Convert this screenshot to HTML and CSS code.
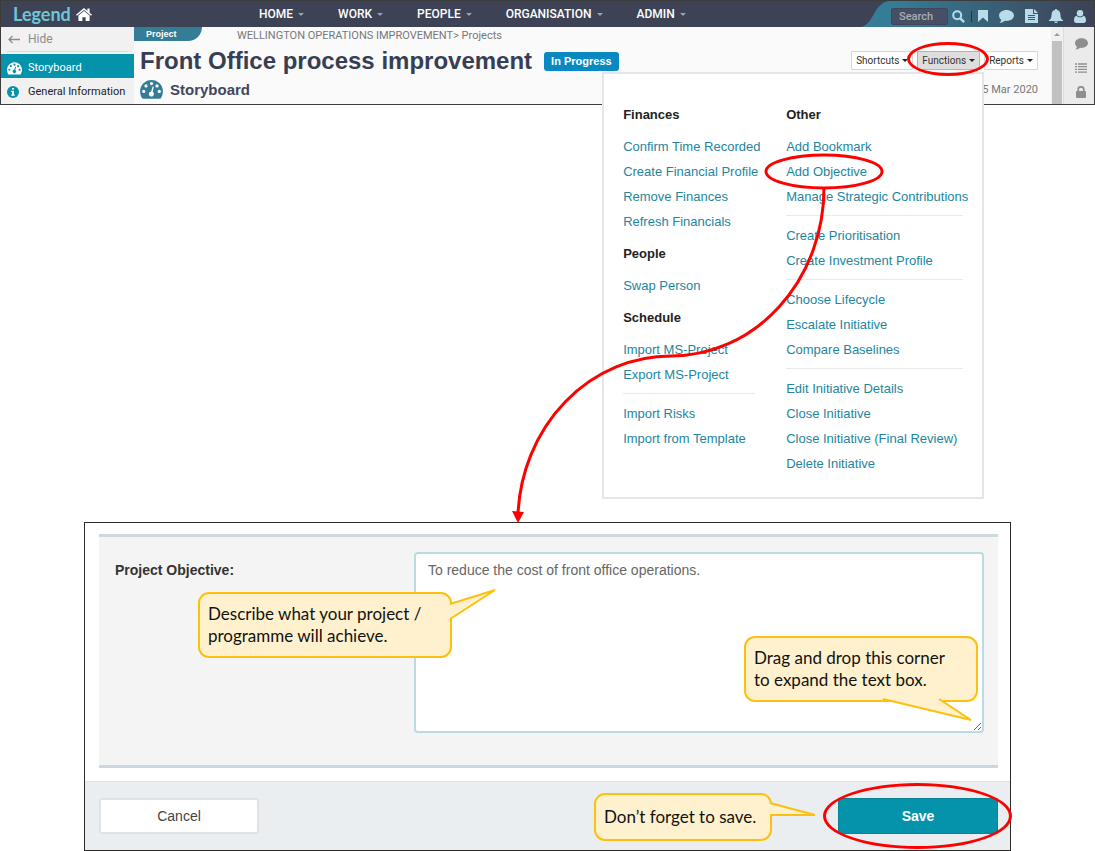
FILE: index.html
```html
<!DOCTYPE html>
<html lang="en">
<head>
<meta charset="utf-8">
<title>Legend - Front Office process improvement</title>
<link rel="stylesheet" href="styles.css">
</head>
<body>
<svg class="defs" aria-hidden="true">
  <symbol id="i-gauge" viewBox="0 0 24 20"><path fill="currentColor" d="M12 0A12 12 0 0 0 0 12c0 2.600 .8 5 2 7 .3.500.6.700 1 .7h18c.4 0 .7-.2 1-.7a12 12 0 0 0 2-7A12 12 0 0 0 12 0z"/><g fill="var(--hole)"><circle cx="3.800" cy="12" r="1.700"/><circle cx="6.200" cy="6.200" r="1.700"/><circle cx="12" cy="3.800" r="1.700"/><circle cx="17.800" cy="6.200" r="1.700"/><circle cx="20.200" cy="12" r="1.700"/><path d="M13.200 6.800l1.300.4-1.200 5.200a2.700 2.700 0 1 1-1.700-.4z"/></g></symbol>
  <symbol id="i-comment" viewBox="0 0 16 14"><path fill="currentColor" d="M8 0c4.400 0 8 2.600 8 5.900s-3.600 5.900-8 5.900c-.6 0-1.200 0-1.700-.1C4.800 13 3 13.700 1 13.900c-.3 0-.4-.3-.2-.5.9-.8 1.400-1.700 1.600-2.900C.9 9.400 0 7.800 0 5.900 0 2.600 3.600 0 8 0z"/></symbol>
</svg>

<div class="window">
  <header class="topbar">
    <a class="logo" href="#"><span>Legend</span>
      <svg width="16" height="13" viewBox="0 0 16 13"><path fill="#fff" d="M8 0L0 6.700l.9 1.100L8 1.900l7.100 5.900.9-1.100-2.400-2V.6h-2.200v2.300z"/><path fill="#fff" d="M8 3L2.400 7.600V13h4V9.200h3.200V13h4V7.600z"/></svg>
    </a>
    <nav class="nav">
      <a href="#">HOME</a><a href="#">WORK</a><a href="#">PEOPLE</a><a href="#">ORGANISATION</a><a href="#">ADMIN</a>
    </nav>
    <div class="tools">
      <svg class="swoosh" width="30" height="26" viewBox="0 0 30 26"><path fill="#357d96" d="M0 26C14 23 12 0 30 0v26z"/></svg>
      <div class="tools-bar">
        <input class="search" type="text" placeholder="Search" aria-label="Search">
        <svg width="13" height="13" viewBox="0 0 13 13"><g fill="none" stroke="#b9dcea" stroke-width="2"><circle cx="5.200" cy="5.200" r="4"/><path d="M8.300 8.300l3.800 3.800" stroke-width="2.400"/></g></svg>
        <i class="sep"></i>
        <svg width="10" height="12" viewBox="0 0 10 12"><path fill="#b9dcea" d="M0 0h10v12L5 7.400 0 12z"/></svg>
        <svg class="pale" width="15" height="13"><use href="#i-comment"/></svg>
        <svg width="13" height="14" viewBox="0 0 13 14"><path fill="#b9dcea" d="M0 0h8v5h5v9H0zM9 0l4 4H9z"/><path stroke="#3b5a70" d="M3 6.500h7M3 8.500h7M3 10.500h7"/></svg>
        <svg width="14" height="14" viewBox="0 0 14 14"><path fill="#b9dcea" d="M7 0c.7 0 1 .5 1 1 2.300.5 3.400 2.300 3.400 4.400 0 3.200 1 4.800 2.600 5.800v.8H0v-.8c1.600-1 2.600-2.600 2.600-5.800C2.600 3.300 3.700 1.500 6 1c0-.5.300-1 1-1zM5.200 12.400h3.600a1.800 1.600 0 0 1-3.600 0z"/></svg>
        <svg width="12" height="13" viewBox="0 0 12 13"><circle cx="6" cy="3.200" r="3.200" fill="#b9dcea"/><path fill="#b9dcea" d="M2.600 5.700C.8 6 0 8 0 10.300 0 12 .9 13 2.400 13h7.200c1.500 0 2.400-1 2.400-2.700C12 8 11.200 6 9.400 5.700 8.500 6.800 7.300 7.300 6 7.300s-2.500-.5-3.400-1.600z"/></svg>
      </div>
    </div>
  </header>

  <div class="workspace">
    <aside class="sidebar">
      <a class="hide" href="#"><svg width="12" height="9" viewBox="0 0 12 9"><path fill="none" stroke="#8d8d8d" stroke-width="1.300" d="M12 4.500H1M4.500 1L1 4.500 4.500 8"/></svg>Hide</a>
      <a class="side active" href="#"><svg width="15" height="13"><use href="#i-gauge"/></svg>Storyboard</a>
      <a class="side" href="#"><svg width="12" height="12" viewBox="0 0 12 12"><circle cx="6" cy="6" r="6" fill="#0592ab"/><path fill="#fff" d="M5 2h2v1.600H5zM4.200 4.800H7v3.700h.8v1.300H4.200V8.500H5V6h-.8z"/></svg>General Information</a>
    </aside>

    <main class="main">
      <div class="crumbs"><span class="tag">Project</span><p>WELLINGTON OPERATIONS IMPROVEMENT&gt; Projects</p></div>
      <div class="headline">
        <h1>Front Office process improvement</h1>
        <span class="badge">In Progress</span>
        <div class="actions">
          <button type="button" class="drop">Shortcuts</button>
          <div class="functions">
            <button type="button" class="drop pressed" aria-expanded="true">Functions</button>
            <div class="menu">
              <div class="column">
                <h3>Finances</h3>
                <ul>
                  <li><a href="#">Confirm Time Recorded</a></li>
                  <li><a href="#">Create Financial Profile</a></li>
                  <li><a href="#">Remove Finances</a></li>
                  <li><a href="#">Refresh Financials</a></li>
                </ul>
                <h3>People</h3>
                <ul><li><a href="#">Swap Person</a></li></ul>
                <h3>Schedule</h3>
                <ul>
                  <li><a href="#">Import MS-Project</a></li>
                  <li><a href="#">Export MS-Project</a></li>
                </ul>
                <hr>
                <ul>
                  <li><a href="#">Import Risks</a></li>
                  <li><a href="#">Import from Template</a></li>
                </ul>
              </div>
              <div class="column">
                <h3>Other</h3>
                <ul>
                  <li><a href="#">Add Bookmark</a></li>
                  <li class="objective"><a href="#">Add Objective</a>
                    <svg class="trail" width="374" height="371" viewBox="511 153 374 371"><g fill="none" stroke="#f00" stroke-width="3"><ellipse cx="825" cy="171.500" rx="58" ry="16.500"/><path d="M825 188A153 168 0 0 1 672 356A153 166 0 0 0 519 514"/></g><path fill="#f00" d="M513 511l12 1-6 11z"/></svg>
                  </li>
                  <li><a href="#">Manage Strategic Contributions</a></li>
                </ul>
                <hr>
                <ul>
                  <li><a href="#">Create Prioritisation</a></li>
                  <li><a href="#">Create Investment Profile</a></li>
                </ul>
                <hr>
                <ul>
                  <li><a href="#">Choose Lifecycle</a></li>
                  <li><a href="#">Escalate Initiative</a></li>
                  <li><a href="#">Compare Baselines</a></li>
                </ul>
                <hr>
                <ul>
                  <li><a href="#">Edit Initiative Details</a></li>
                  <li><a href="#">Close Initiative</a></li>
                  <li><a href="#">Close Initiative (Final Review)</a></li>
                  <li><a href="#">Delete Initiative</a></li>
                </ul>
              </div>
            </div>
            <i class="ring ring-functions"></i>
          </div>
          <button type="button" class="drop">Reports</button>
        </div>
      </div>
      <div class="subline">
        <h2><svg width="23" height="19"><use href="#i-gauge"/></svg>Storyboard</h2>
        <time datetime="2020-03-15">15 Mar 2020</time>
      </div>
    </main>

    <div class="scroll"><i class="up"></i><i class="thumb"></i></div>
    <div class="rail">
      <svg width="13" height="12"><use href="#i-comment"/></svg>
      <svg width="12" height="10" viewBox="0 0 12 10"><path stroke="currentColor" stroke-width="1.300" d="M0 1h2M3 1h9M0 3.700h2M3 3.700h9M0 6.400h2M3 6.400h9M0 9.100h2M3 9.100h9"/></svg>
      <svg width="10" height="12" viewBox="0 0 10 12"><rect y="5" width="10" height="7" rx="1" fill="currentColor"/><path fill="none" stroke="currentColor" stroke-width="1.700" d="M2.200 5.500V3.600a2.800 2.800 0 0 1 5.600 0v1.900"/></svg>
    </div>
  </div>
</div>

<form class="dialog" onsubmit="return false">
  <div class="panel">
    <label for="objective">Project Objective:</label>
    <div class="field">
      <textarea id="objective">To reduce the cost of front office operations.</textarea>
      <div class="callout note-describe">Describe what your project /<br>programme will achieve.
        <svg width="50" height="34" viewBox="0 0 50 34"><path fill="#fff1cd" stroke="#fdc010" stroke-width="2" stroke-linejoin="bevel" d="M1 16L46 2 1 31"/></svg></div>
      <div class="callout note-drag">Drag and drop this corner<br>to expand the text box.
        <svg width="96" height="26" viewBox="0 0 96 26"><path fill="#fff1cd" stroke="#fdc010" stroke-width="2" stroke-linejoin="bevel" d="M2 1L90 22 58 1"/></svg></div>
    </div>
  </div>
  <footer class="buttons">
    <button type="button" class="cancel">Cancel</button>
    <div class="saving">
      <button type="submit" class="save">Save</button>
      <i class="ring ring-save"></i>
      <div class="callout note-save">Don’t forget to save.
        <svg width="50" height="16" viewBox="0 0 50 16"><path fill="#fff1cd" stroke="#fdc010" stroke-width="2" stroke-linejoin="bevel" d="M1 2L46 14H1"/></svg></div>
    </div>
  </footer>
</form>
</body>
</html>
```

FILE: styles.css
```css
* { box-sizing: border-box; }
body { margin: 0; background: #fff; font-family: "Liberation Sans", Arial, sans-serif; color: #333; }
h1, h2, h3, p, ul { margin: 0; padding: 0; }
ul { list-style: none; }
a { text-decoration: none; }
button, input, textarea { font-family: inherit; margin: 0; }
svg { display: block; flex: none; }
.defs { position: absolute; width: 0; height: 0; }

/* Application window */
.window { border: 1px solid #3c3c3c; }
.topbar { display: flex; align-items: stretch; height: 26px; background: #3d4255; }
.logo { display: flex; align-items: center; gap: 5px; width: 258px; padding-left: 12px; color: #6cc8d8; font: 700 18px/24px Lato, sans-serif; }
.nav { display: flex; align-items: center; gap: 34px; flex: 1; }
.nav a { display: flex; align-items: center; gap: 5px; color: #fff; font: 500 12px/24px Roboto, sans-serif; }
.nav a::after { content: ""; border: 3px solid transparent; border-top-color: #8fa5b0; border-bottom: 0; }
.tools { display: flex; }
.tools-bar { display: flex; align-items: center; gap: 11px; padding: 4px 8px 0 0; background: linear-gradient(90deg, #357d96, #3d4458 95%); }
.search { width: 57px; height: 17px; margin-right: -7px; padding: 0 7px; border: 1px solid #3e475c; border-radius: 2px; background: #474f66; color: #b4b7bf; font: 500 11px/15px Roboto, sans-serif; }
.search::placeholder { color: #a9acb5; opacity: 1; }
.sep { width: 1px; height: 11px; margin: 0 -5px; background: #2c3340; }
.pale { color: #b9dcea; }

.workspace { display: flex; height: 77px; background: #fafafa; }
.sidebar { width: 133px; background: #f1f1f1; font: 11px/24px Roboto, sans-serif; }
.hide { display: flex; align-items: center; gap: 8px; height: 25px; margin: 0 5px 2px 6px; padding-left: 1px; border-bottom: 1px solid #dcdcdc; color: #8d8d8d; font-size: 12px; }
.side { display: grid; grid-template-columns: 14px auto; gap: 7px; align-items: center; height: 24px; padding: 2px 0 0 6px; color: #222; }
.side.active { background: #0592ab; color: #fff; --hole: #0592ab; }

.main { flex: 1; min-width: 0; padding-right: 13px; }
.crumbs { display: flex; align-items: flex-start; gap: 35px; height: 19px; color: #777; font: 11px/17px Roboto, sans-serif; }
.tag { width: 68px; height: 14px; padding-left: 12px; border-radius: 0 0 14px 0; background: #357d96; color: #fff; font: 700 9px/14px "Liberation Sans", sans-serif; }
.headline { display: flex; align-items: center; height: 29px; padding-left: 6px; }
h1 { color: #373e54; font-size: 24px; line-height: 28px; white-space: nowrap; }
.badge { margin: 2px 0 0 12px; padding: 0 7px; border-radius: 3px; background: #0a88c2; color: #fff; font-weight: 700; font-size: 11px; line-height: 19px; white-space: nowrap; }
.actions { display: flex; gap: 4px; margin-left: auto; }
.functions { position: relative; }
.drop { display: flex; align-items: center; gap: 3px; height: 19px; padding: 0 4px; border: 1px solid #d6d6d6; border-radius: 1px; background: #fff; color: #333; font: 10px/17px Roboto, sans-serif; }
.drop::after { content: ""; border: 3px solid transparent; border-top-color: #222; border-bottom: 0; }
.drop.pressed { border-color: #b4b4b4; background: #dedede; }
.subline { display: flex; align-items: center; justify-content: space-between; height: 29px; padding-left: 6px; color: #777; font: 11px/20px Roboto, sans-serif; }
h2 { display: flex; align-items: center; gap: 7px; color: #41475d; font: 700 15px/20px "Liberation Sans", sans-serif; --hole: #fafafa; }
h2 svg { color: #357d96; }
.scroll { width: 12px; background: #f1f1f1; }
.up { display: block; width: 6px; margin: 6px auto 5px; border: 3px solid transparent; border-bottom-color: #9b9b9b; border-top: 0; }
.thumb { display: block; width: 10px; height: 63px; margin: 0 auto; background: #c1c1c1; }
.rail { display: flex; flex-direction: column; align-items: center; gap: 13px; width: 31px; padding: 11px 0 0 4px; border-left: 1px solid #ddd; background: #ebebeb; color: #8e8e8e; }

/* Functions menu */
.menu { position: absolute; z-index: 1; top: 21px; right: -4px; display: grid; grid-template-columns: 132px 177px; gap: 31px; padding: 21px 19px; border: 2px solid #e6e6e6; background: #fff; font-size: 13px; line-height: 25px; white-space: nowrap; }
.menu h3 { color: #222; font-size: 13px; line-height: 39px; }
.menu a { color: #23869d; }
.menu hr { height: 1px; margin: 6px 0 7px; border: 0; background: #eaeaea; }
.objective { position: relative; }
.trail { position: absolute; top: -6px; left: -276px; z-index: 2; pointer-events: none; }
.ring { position: absolute; z-index: 3; border: 3px solid #f00; border-radius: 50%; pointer-events: none; }
.ring-functions { inset: -9px -9px -6px -10px; }

/* Objective form */
.dialog { margin: 417px 84px 0; border: 1px solid #2b2b2b; }
.panel { display: grid; grid-template-columns: 299px 1fr; margin: 11px 12px 13px 14px; padding: 15px 14px 32px 16px; border: solid #cdd8de; border-width: 3px 0; background: #f4f4f4; }
.panel label { color: #333; font-weight: 700; font-size: 14px; line-height: 36px; }
.field { position: relative; }
textarea { display: block; width: 100%; height: 181px; padding: 7px 12px; border: 2px solid #bbdae2; border-radius: 4px; background: #fff; color: #666; font-size: 14px; line-height: 18px; resize: vertical; }
.buttons { display: flex; justify-content: space-between; padding: 16px 12px 16px 14px; border-top: 1px solid #dde2e4; background: #ebeef0; }
.buttons button { display: block; width: 160px; height: 36px; border: 2px solid #e0e2e3; border-radius: 3px; background: #fff; color: #444; font-size: 14px; }
.buttons .save { border: 1px solid #0a8399; border-radius: 1px; background: #0592ab; color: #fff; font-weight: 700; }
.saving { position: relative; }
.ring-save { inset: -15px -14px -15px -15px; }

/* Notes */
.callout { position: absolute; z-index: 2; padding: 9px 8px; border: 2px solid #fdc010; border-radius: 11px; background: #fff1cd; color: #111; font: 17px/22px Lato, sans-serif; white-space: nowrap; }
.callout svg { position: absolute; }
.note-describe { top: 40px; left: -216px; width: 254px; }
.note-describe svg { top: -6px; left: 249px; }
.note-drag { top: 84px; right: 6px; width: 234px; }
.note-drag svg { top: 60px; left: 135px; }
.note-save { top: -5px; right: 226px; width: 178px; padding: 11px 8px; }
.note-save svg { top: 6px; left: 173px; }
```
